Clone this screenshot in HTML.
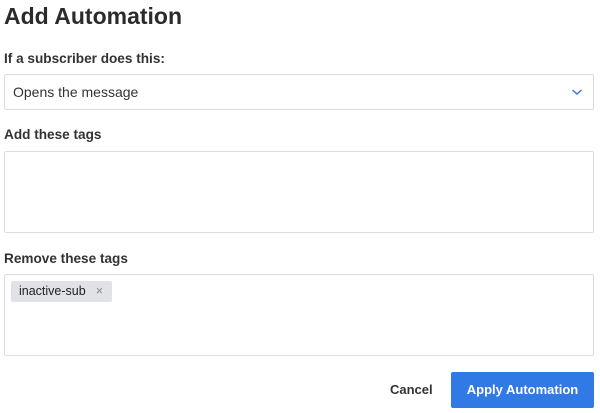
<!DOCTYPE html>
<html><head><style>
*{box-sizing:border-box;margin:0;padding:0}
body{width:600px;height:413px;background:#fff;font-family:"Liberation Sans",sans-serif;color:#333;position:relative;overflow:hidden}
.a{position:absolute}
h1{position:absolute;left:4px;top:3px;font-size:23px;font-weight:bold;color:#2b2b2b}
.lbl{position:absolute;left:4px;font-size:13.6px;font-weight:bold;color:#333}
.box{position:absolute;left:4px;width:590px;border:1px solid #dcdde2;border-radius:2px;background:#fff}
</style></head><body>
<h1>Add Automation</h1>
<div class="lbl" style="top:51px">If a subscriber does this:</div>
<div class="box" style="top:74px;height:36px"><span class="a" style="left:8px;top:9px;font-size:14px;color:#333">Opens the message</span>
<svg class="a" style="left:566px;top:12px" width="12" height="10" viewBox="0 0 12 10"><path d="M1.5 3 L6 7 L10.5 3" fill="none" stroke="#3a78e0" stroke-width="1.5"/></svg></div>
<div class="lbl" style="top:127px">Add these tags</div>
<div class="box" style="top:151px;height:82px"></div>
<div class="lbl" style="top:251px">Remove these tags</div>
<div class="box" style="top:274px;height:82px">
<div class="a" style="left:6px;top:6px;width:101px;height:21px;background:#e0e2e8;border-radius:2px;font-size:12.5px;color:#222;padding:3px 0 0 8px">inactive-sub<span style="color:#888;margin-left:10px">×</span></div></div>
<div class="a" style="left:390px;top:382px;font-size:13px;font-weight:bold;color:#333">Cancel</div>
<div class="a" style="left:451px;top:372px;width:143px;height:36px;background:#3179e4;border-radius:2px;color:#fff;font-size:13px;font-weight:bold;text-align:center;line-height:36px">Apply Automation</div>
</body></html>
